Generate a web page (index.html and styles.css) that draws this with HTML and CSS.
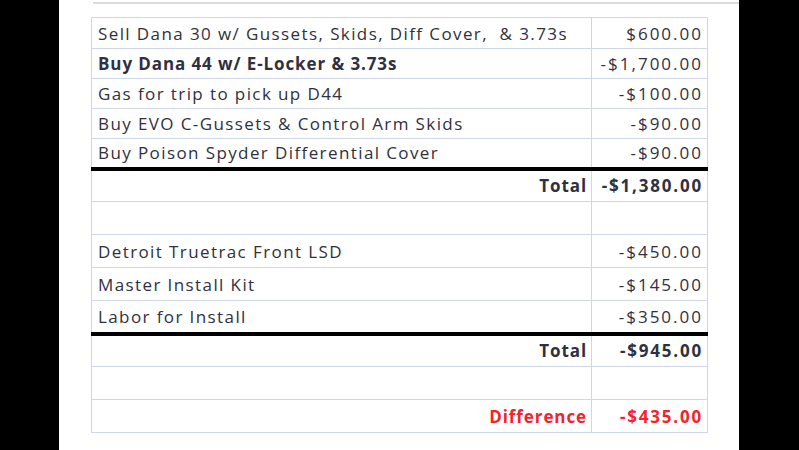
FILE: index.html
```html
<!DOCTYPE html>
<html>
<head>
<meta charset="utf-8">
<link rel="stylesheet" href="styles.css">
</head>
<body>
<div class="panel">
  <div class="topline"></div>
  <table class="sheet">
    <tr class="first"><td class="desc">Sell Dana 30 w/ Gussets, Skids, Diff Cover,&nbsp; &amp; 3.73s</td><td class="amt">$600.00</td></tr>
    <tr><td class="desc bold">Buy Dana 44 w/ E-Locker &amp; 3.73s</td><td class="amt">-$1,700.00</td></tr>
    <tr><td class="desc">Gas for trip to pick up D44</td><td class="amt">-$100.00</td></tr>
    <tr><td class="desc">Buy EVO C-Gussets &amp; Control Arm Skids</td><td class="amt">-$90.00</td></tr>
    <tr><td class="desc">Buy Poison Spyder Differential Cover</td><td class="amt">-$90.00</td></tr>
    <tr class="total tall"><td class="desc right bold">Total</td><td class="amt bold">-$1,380.00</td></tr>
    <tr class="tall"><td class="desc"></td><td class="amt"></td></tr>
    <tr class="tall"><td class="desc">Detroit Truetrac Front LSD</td><td class="amt">-$450.00</td></tr>
    <tr class="tall"><td class="desc">Master Install Kit</td><td class="amt">-$145.00</td></tr>
    <tr class="tall"><td class="desc">Labor for Install</td><td class="amt">-$350.00</td></tr>
    <tr class="total tall"><td class="desc right bold">Total</td><td class="amt bold">-$945.00</td></tr>
    <tr class="tall"><td class="desc"></td><td class="amt"></td></tr>
    <tr class="tall red"><td class="desc right bold">Difference</td><td class="amt bold">-$435.00</td></tr>
  </table>
</div>
</body>
</html>
```
FILE: styles.css
```css
html, body {
  margin: 0;
  padding: 0;
  background: #000;
  height: 450px;
  overflow: hidden;
}
.panel {
  margin-left: 59px;
  width: 680px;
  height: 450px;
  background: #fff;
  padding-top: 2px;
  box-sizing: border-box;
}
.topline {
  margin-left: 34px;
  height: 2px;
  background: #dcdcdc;
}
.sheet {
  margin-top: 13px;
  margin-left: 32px;
  border-collapse: collapse;
  font-family: "Open Sans", Lato, sans-serif;
  font-size: 17px;
  color: #30303f;
}
.sheet td {
  border: 1px solid #cfd6e8;
  height: 30px;
  box-sizing: border-box;
  white-space: nowrap;
}
.sheet tr.first td {
  height: 31px;
}
.sheet tr.tall td {
  height: 33px;
}
.sheet td.desc {
  width: 500px;
  text-align: left;
  padding: 0 4px 0 6px;
  letter-spacing: 1.4px;
}
.sheet td.desc.bold {
  letter-spacing: 0.9px;
}
.sheet td.amt {
  width: 116px;
  text-align: right;
  padding: 0 4px 0 4px;
  letter-spacing: 2px;
}
.sheet td.amt.bold {
  letter-spacing: 1.8px;
}
.sheet td.right {
  text-align: right;
  letter-spacing: 0.6px;
}
.bold {
  font-weight: bold;
}
.sheet tr.total td {
  border-top: 4px solid #000;
}
.sheet tr.red td {
  color: #f5222d;
}
```
